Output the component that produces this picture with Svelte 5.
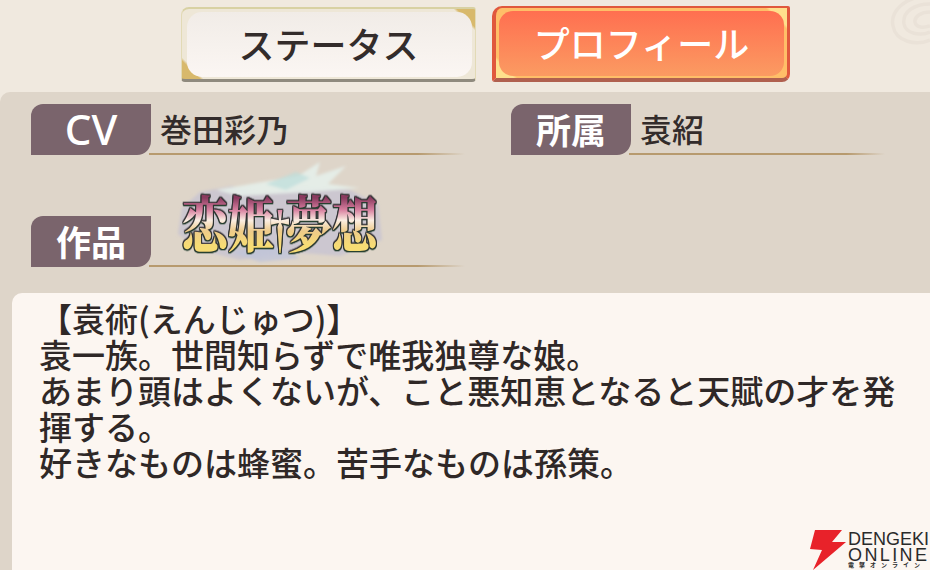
<script>
  const fields = [
    { label: 'CV', value: '巻田彩乃', latin: true },
    { label: '所属', value: '袁紹' }
  ];
  const lines = ['【袁術(えんじゅつ)】', '袁一族。世間知らずで唯我独尊な娘。', 'あまり頭はよくないが、こと悪知恵となると天賦の才を発', '揮する。', '好きなものは蜂蜜。苦手なものは孫策。'];
</script>

<div class="page">
  <svg class="swirl" viewBox="0 0 40 46" aria-hidden="true">
    <g fill="none" stroke="#eae2d8" stroke-width="3.5">
      <path d="M40 -4C14 -4 0 12 3 26C6 42 26 46 40 40"/>
      <path d="M40 4C24 4 12 12 14 24C16 34 30 36 40 32"/>
      <path d="M40 12C32 12 24 16 25 22C26 28 34 28 40 26"/>
    </g>
  </svg>
  <nav class="tabs">
    <div class="tab status"><span>ステータス</span></div>
    <div class="tab profile"><span>プロフィール</span></div>
  </nav>

  <section class="panel">
    <div class="fields">
      {#each fields as f}
        <div class="field">
          <div class="label" class:latin={f.latin}>{f.label}</div>
          <div class="value">{f.value}</div>
        </div>
      {/each}
      <div class="field work">
        <div class="label">作品</div>
        <div class="logo">
          <svg class="splash" viewBox="0 0 220 105" aria-hidden="true">
            <defs><filter id="soft"><feGaussianBlur stdDeviation="1.6"/></filter></defs>
            <g filter="url(#soft)">
              <path d="M12 48L30 32L62 26L90 34L130 28L180 30L208 44L212 80L170 96L120 92L70 100L30 90L8 74Z" fill="#c6c2d2" opacity=".75"/>
              <path d="M46 30L92 22L128 16L150 2L146 16L176 6L158 24L190 28L140 32L100 34L70 36Z" fill="#e6f0ea" opacity=".9"/>
              <path d="M96 24L126 12L140 18L116 30Z" fill="#bcdedb" opacity=".7"/>
              <path d="M60 92L104 84L130 98L90 102Z" fill="#bfc4da" opacity=".8"/>
            </g>
          </svg>
          <span class="logotext">恋姫<small>†</small>夢想</span>
        </div>
      </div>
    </div>

    <article class="body">
      {#each lines as l}<p>{l}</p>{/each}
      <div class="brand">
        <svg class="bolt" viewBox="0 0 36 40" aria-hidden="true">
          <path d="M5 0H32L22 12H36L3 40L12 20L0 19Z" fill="#e8222a"/>
        </svg>
        <div class="brandtext">
          <div>DENGEKI</div>
          <div class="online">ONLINE</div>
          <small>電撃オンライン</small>
        </div>
      </div>
    </article>
  </section>
</div>

<style>
  :global(body) { margin: 0; }
  .page {
    position: relative;
    width: 930px;
    height: 570px;
    overflow: hidden;
    background: #f0e9df;
    font-family: "Noto Sans CJK JP", "Noto Sans", sans-serif;
    color: #332c2b;
  }
  .swirl { position: absolute; right: 0; top: 0; width: 40px; height: 46px; }
  .tabs {
    position: relative;
    display: flex;
    gap: 16px;
    padding: 6px 0 0 181px;
    height: 92px;
    box-sizing: border-box;
  }
  .tab {
    box-sizing: border-box;
    display: flex;
    align-items: center;
    justify-content: center;
    font-size: 36px;
    font-weight: 500;
    line-height: 1;
    padding-bottom: 2px;
    position: relative;
    z-index: 0;
  }
  .status {
    width: 295px;
    margin-top: 1px;
    height: 75px;
    border-radius: 8px 3px 4px 4px;
    border: 1px solid #e2dab6;
    border-top: 2px solid #d8d1a3;
    border-bottom: 3px solid #8f8a7e;
    background: linear-gradient(45deg, #d8b96c 0 5%, #eee7d7 6% 94%, #d8b96c 95%);
  }
  .status::before {
    content: "";
    position: absolute;
    inset: 3px 3px 2px 5px;
    border-radius: 15px;
    background: linear-gradient(#f1ece7, #fbf6f3);
    z-index: -1;
  }
  .status span { color: #332c2b; }
  .profile {
    width: 298px;
    height: 76px;
    border-radius: 10px 2px 8px 3px;
    border: 2px solid #e0583d;
    border-left-width: 4px;
    border-right-width: 3px;
    border-bottom: 4px solid #b0604f;
    background: linear-gradient(45deg, #ffe08c 0 5%, #ffbe68 6% 94%, #ffe08c 95%);
    color: #fff;
  }
  .profile::before {
    content: "";
    position: absolute;
    inset: 3px 3px 2px 3px;
    border-radius: 14px;
    background: linear-gradient(#ff6f50, #fb9b62);
    z-index: -1;
  }
  .panel {
    position: relative;
    height: 478px;
    box-sizing: border-box;
    background: #ded5c9;
    border-radius: 10px 0 0 0;
    padding: 12px 0 0 12px;
  }
  .fields {
    display: grid;
    grid-template-columns: 480px 375px;
    grid-auto-rows: 51px;
    align-content: start;
    padding-left: 19px;
    row-gap: 61px;
    height: 189px;
  }
  .field { display: flex; height: 51px; position: relative; }
  .field::after {
    content: "";
    position: absolute;
    left: 118px;
    width: 316px;
    bottom: 0;
    height: 2px;
    background: linear-gradient(90deg, #b79a6e, #b79a6e 85%, #ded5c9);
  }
  .field:nth-child(2)::after { width: 256px; }
  .label {
    box-sizing: border-box;
    width: 120px;
    height: 51px;
    background: #7a646c;
    border-radius: 12px 0 14px 0;
    color: #fff;
    font-size: 35px;
    font-weight: 700;
    display: flex;
    align-items: center;
    justify-content: center;
    line-height: 1;
    padding-bottom: 2px;
    position: relative;
    z-index: 1;
  }
  .label.latin { font-family: "Noto Sans", sans-serif; font-size: 42px; font-weight: 500; }
  .value {
    margin-left: 9px;
    font-size: 32px;
    font-weight: 500;
    line-height: 48px;
  }
  .work { grid-column: 1; }
  .logo {
    position: absolute;
    left: 139px;
    top: -56px;
    width: 220px;
    height: 105px;
    display: flex;
    align-items: center;
    justify-content: center;
  }
  .splash { position: absolute; inset: 0; width: 100%; height: 100%; }
  .logotext {
    position: relative;
    top: 10px;
    font-family: "Noto Serif CJK JP", "Noto Sans CJK JP", serif;
    font-weight: 900;
    font-size: 46px;
    line-height: 1;
    white-space: nowrap;
    transform: scaleY(1.32);
    background: linear-gradient(#8a3a5f 12%, #d77f9f 30%, #fbeee2 46%, #eecb8a 62%, #f6dc74 84%);
    -webkit-background-clip: text;
    background-clip: text;
    color: transparent;
    filter: drop-shadow(1px 0 0 #2f3032) drop-shadow(-1px 0 0 #2f3032) drop-shadow(0 1px 0 #26402f) drop-shadow(0 -1px 0 #4a4448);
  }
  .logotext small {
    font-family: "Liberation Serif", serif;
    font-size: 40px;
    margin: 0 -4px;
  }
  .body {
    position: relative;
    height: 277px;
    box-sizing: border-box;
    background: #fcf6f1;
    border-radius: 10px 0 0 0;
    padding: 7px 0 0 27px;
    font-size: 33px;
    font-weight: 500;
    line-height: 36px;
    color: #2f2827;
  }
  .body p { margin: 0; white-space: nowrap; }
  .brand {
    position: absolute;
    right: 0;
    bottom: 0;
    display: flex;
    gap: 2px;
    align-items: flex-start;
    width: 120px;
    height: 40px;
    overflow: hidden;
  }
  .bolt { width: 36px; height: 40px; flex: none; }
  .brandtext {
    font-family: "Liberation Sans", sans-serif;
    font-size: 18px;
    line-height: 16px;
    color: #2a2a2a;
    padding-top: 1px;
    white-space: nowrap;
  }
  .online { letter-spacing: 2.4px; }
  .brandtext small {
    display: block;
    margin-top: -2px;
    font-family: "Noto Sans CJK JP", sans-serif;
    font-size: 6px;
    line-height: 7px;
    letter-spacing: 5px;
    font-weight: 700;
  }
</style>
